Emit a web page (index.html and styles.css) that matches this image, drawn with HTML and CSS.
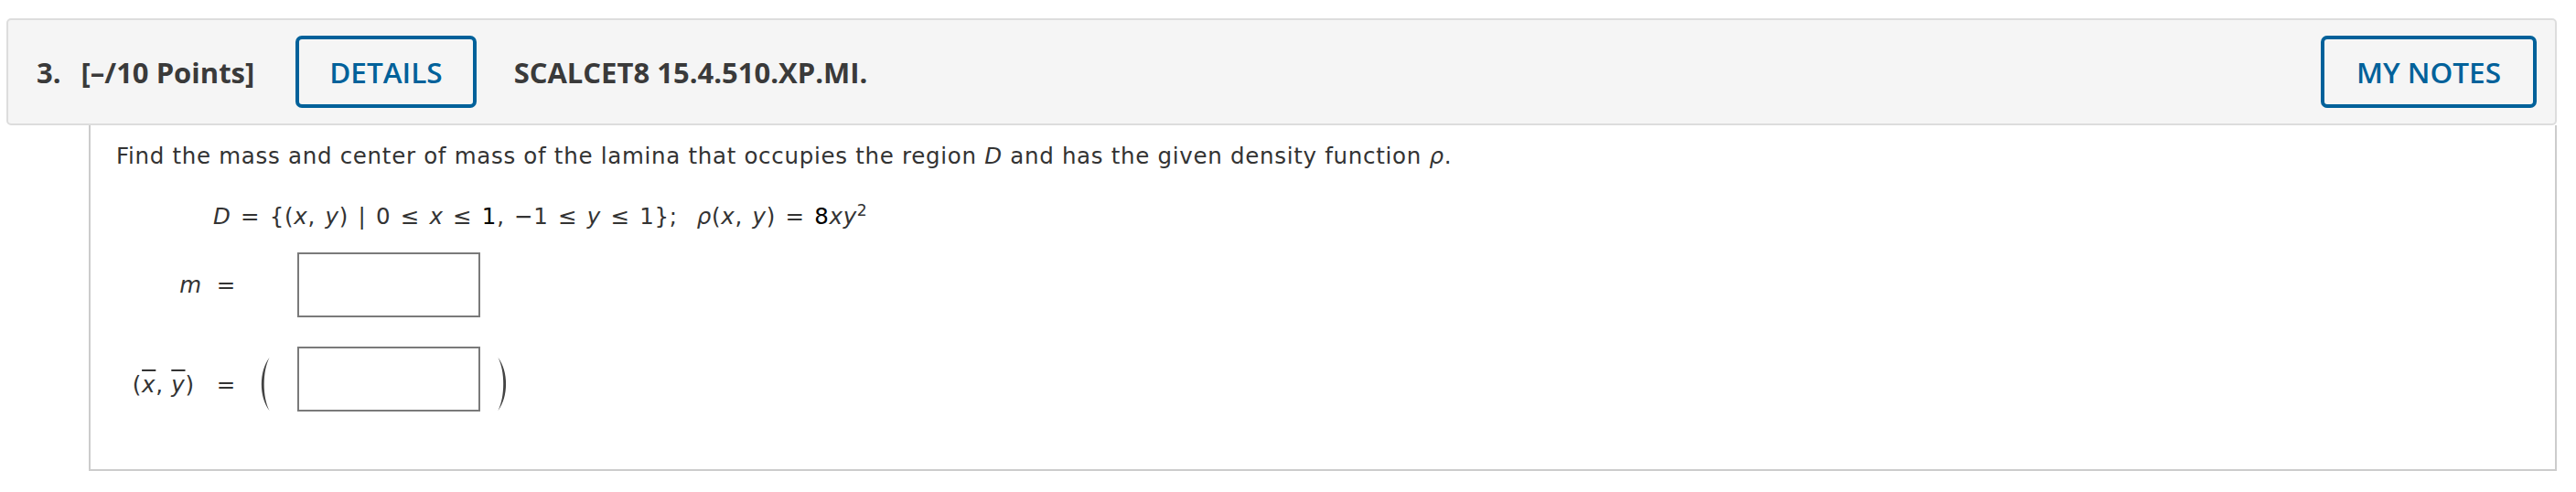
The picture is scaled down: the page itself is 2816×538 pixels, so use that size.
FILE: index.html
```html
<!DOCTYPE html>
<html lang="en">
<head>
<meta charset="utf-8">
<title>Question 3</title>
<link rel="stylesheet" href="styles.css">
</head>
<body>
<div class="page">
  <div class="qhead">
    <span class="qnum">3.</span>
    <span class="qpts">[–/10 Points]</span>
    <button class="btn btn-details" type="button">DETAILS</button>
    <span class="qid">SCALCET8 15.4.510.XP.MI.</span>
    <button class="btn btn-notes" type="button">MY NOTES</button>
  </div>
  <div class="qbody">
    <p class="prompt">Find the mass and center of mass of the lamina that occupies the region <i>D</i> and has the given density function <i>ρ</i>.</p>
    <p class="given"><i>D</i> = {(<i>x</i>, <i>y</i>) | 0 ≤ <i>x</i> ≤ <span class="dk">1</span>, −1 ≤ <i>y</i> ≤ 1};&nbsp; <i>ρ</i>(<i>x</i>, <i>y</i>) = <span class="dk">8</span><i>xy</i><sup>2</sup></p>
    <div class="answers">
      <span class="alabel"><i>m</i><span class="eq eq-m">=</span></span>
      <span class="lparen"></span>
      <input class="abox" type="text" aria-label="m">
      <span class="rparen"></span>

      <span class="alabel alabel-c">(<i class="bar">x</i>, <i class="bar">y</i>)<span class="eq eq-c">=</span></span>
      <span class="lparen"><svg class="paren" width="14" height="58" viewBox="0 0 14 58"><path d="M12.5 0 C1 15 1 43 12.5 58 C4.8 43 4.8 15 12.5 0 Z" fill="#444"/></svg></span>
      <input class="abox" type="text" aria-label="center of mass">
      <span class="rparen"><svg class="paren" width="14" height="58" viewBox="0 0 14 58"><path d="M1.5 0 C13 15 13 43 1.5 58 C9.2 43 9.2 15 1.5 0 Z" fill="#444"/></svg></span>
    </div>
  </div>
</div>
</body>
</html>
```
FILE: styles.css
```css
body {
  margin: 0;
  background: #ffffff;
  font-family: "DejaVu Sans", Verdana, sans-serif;
  color: #333333;
}

.page {
  padding: 20px 21px 0 7px;
}

.qhead {
  display: flex;
  align-items: center;
  height: 117px;
  box-sizing: border-box;
  border: 2px solid #dddddd;
  border-radius: 5px;
  background: #f5f5f5;
  padding: 0 20px 0 31px;
  font-family: "Open Sans", "Liberation Sans", sans-serif;
  font-weight: 700;
  font-size: 31px;
  color: #3a3a3a;
  white-space: nowrap;
}

.qnum {
  margin-right: 22px;
}

.qpts {
  margin-right: 45px;
}

.btn {
  height: 79px;
  box-sizing: border-box;
  padding: 0 33px;
  border: 4px solid #00619a;
  border-radius: 7px;
  background: transparent;
  color: #00619a;
  font-family: "Open Sans", "Liberation Sans", sans-serif;
  font-weight: 600;
  font-size: 31.5px;
  line-height: 1;
  cursor: pointer;
}

.btn-details {
  margin-right: 41px;
}

.btn-notes {
  margin-left: auto;
  padding: 0 35px;
}

.qbody {
  margin-left: 90px;
  border: 2px solid #cccccc;
  border-top: none;
  padding: 16px 28px 63px 28px;
  font-size: 24.5px;
  letter-spacing: 0.7px;
}

.prompt {
  margin: 0;
  line-height: 36px;
}

.given {
  margin: 30px 0 0 106px;
  line-height: 36px;
  word-spacing: 2px;
}

.given sup {
  font-size: 70%;
  line-height: 0;
  vertical-align: 0.55em;
}

.dk {
  color: #000000;
}

.answers {
  display: grid;
  grid-template-columns: 131px 67px 200px 60px;
  row-gap: 32px;
  align-items: center;
  margin-top: 21px;
}

.alabel {
  text-align: right;
  white-space: nowrap;
}

.alabel-c {
  padding-top: 12px;
}

.eq {
  display: inline-block;
}

.eq-m {
  margin-left: 16px;
}

.eq-c {
  margin-left: 24px;
}

.bar {
  text-decoration: overline;
  text-decoration-thickness: 2px;
}

.lparen {
  display: flex;
  justify-content: flex-start;
  padding-left: 24px;
}

.rparen {
  display: flex;
  padding-left: 18px;
}

.paren {
  display: block;
  margin-top: 10px;
}

.abox {
  width: 200px;
  height: 71px;
  box-sizing: border-box;
  border: 2px solid #7a7a7a;
  border-radius: 0;
  background: #ffffff;
  margin: 0;
  padding: 0 8px;
  font-size: 23.4px;
}
```
